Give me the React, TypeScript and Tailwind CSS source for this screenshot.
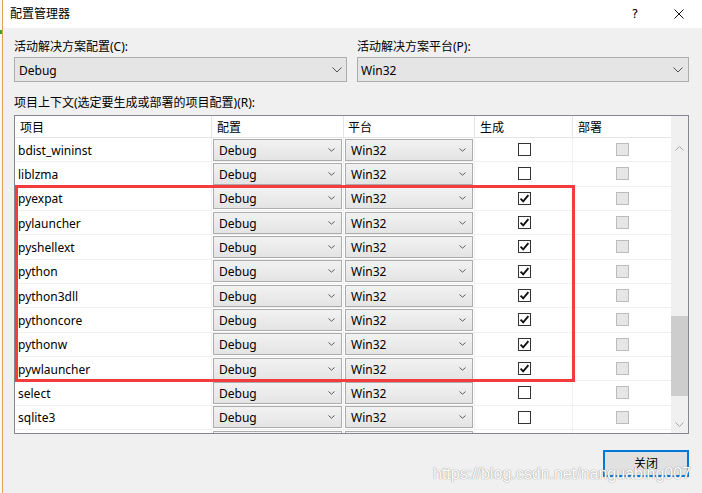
import React from "react";

const rows: { name: string; build: boolean }[] = [
  { name: "bdist_wininst", build: false },
  { name: "liblzma", build: false },
  { name: "pyexpat", build: true },
  { name: "pylauncher", build: true },
  { name: "pyshellext", build: true },
  { name: "python", build: true },
  { name: "python3dll", build: true },
  { name: "pythoncore", build: true },
  { name: "pythonw", build: true },
  { name: "pywlauncher", build: true },
  { name: "select", build: false },
  { name: "sqlite3", build: false },
  { name: "", build: false },
];

function BigChevron() {
  return (
    <svg width="10" height="6" viewBox="0 0 10 6" className="shrink-0">
      <path d="M0.5 0.5 L5 5 L9.5 0.5" fill="none" stroke="#505050" strokeWidth="1" />
    </svg>
  );
}

function SmallChevron() {
  return (
    <svg width="7" height="4" viewBox="0 0 7 4" className="shrink-0">
      <path d="M0.5 0.5 L3.5 3.2 L6.5 0.5" fill="none" stroke="#5a5a5a" strokeWidth="1" />
    </svg>
  );
}

function CellCombo({ text, width }: { text: string; width: string }) {
  return (
    <div
      className={`${width} ml-[1px] h-[22px] border border-[#acacac] bg-gradient-to-b from-[#f2f2f2] to-[#e4e4e4] flex items-center justify-between pl-[5px] pr-[6px]`}
    >
      <span className="pt-[2px]">{text}</span>
      <SmallChevron />
    </div>
  );
}

function Check({ on }: { on: boolean }) {
  return (
    <div className="w-[13px] h-[13px] border border-[#333333] bg-white flex items-center justify-center">
      {on && (
        <svg width="11" height="11" viewBox="0 0 11 11">
          <path d="M1.6 5.6 L4.2 8.3 L9.4 2.2" fill="none" stroke="#111" strokeWidth="1.9" />
        </svg>
      )}
    </div>
  );
}

function DisabledCheck() {
  return <div className="w-[13px] h-[13px] border border-[#bcbcbc] bg-[#e6e6e6]" />;
}

export default function App() {
  return (
    <div className="relative w-[702px] h-[493px] overflow-hidden flex bg-[#f0f0f0] text-[12px] leading-[16px] text-black font-['Noto_Sans','Noto_Sans_CJK_SC',sans-serif]">
      {/* left edge strip */}
      <div className="w-[2px] h-full bg-[#f7f7f7] flex flex-col">
        <div className="h-[30px]" />
        <div className="h-[4px] bg-[#3aa13a]" />
      </div>
      <div className="w-[1px] h-full bg-[#e6a24e]" />

      {/* dialog */}
      <div className="flex-1 flex flex-col">
        {/* title bar */}
        <div className="h-[28px] bg-white flex items-center justify-between pl-[7px] pr-[18px] pb-[1px]">
          <span className="text-[12px]">配置管理器</span>
          <div className="flex items-center gap-[36px]">
            <span className="text-[12px] font-['DejaVu_Sans',sans-serif]">?</span>
            <svg width="10" height="10" viewBox="0 0 10 10">
              <path d="M0.5 0.5 L9.5 9.5 M9.5 0.5 L0.5 9.5" stroke="#111" strokeWidth="1" />
            </svg>
          </div>
        </div>

        {/* body */}
        <div className="flex flex-col pl-[11px] pr-[13px] pt-[11px]">
          <div className="grid grid-cols-[333px_332px] gap-x-[10px]">
            <div className="flex flex-col">
              <span>活动解决方案配置(C):</span>
              <div className="mt-[2px] h-[25px] border border-[#adadad] bg-[#e5e5e5] flex items-center justify-between pl-[4px] pr-[4px]">
                <span className="pt-[2px]">Debug</span>
                <BigChevron />
              </div>
            </div>
            <div className="flex flex-col">
              <span>活动解决方案平台(P):</span>
              <div className="mt-[2px] h-[25px] border border-[#adadad] bg-[#e5e5e5] flex items-center justify-between pl-[3px] pr-[5px]">
                <span className="pt-[2px]">Win32</span>
                <BigChevron />
              </div>
            </div>
          </div>

          <span className="mt-[13px]">项目上下文(选定要生成或部署的项目配置)(R):</span>

          {/* table */}
          <div className="mt-[4px] w-[675px] h-[319px] border border-[#828790] bg-white flex overflow-hidden">
            <div className="flex-1 flex flex-col">
              {/* header */}
              <div className="h-[22px] shrink-0 flex border-b border-[#e5e5e5] bg-white">
                <div className="w-[197px] border-r border-[#e5e5e5] pl-[5px] pt-[2px] flex items-center">项目</div>
                <div className="w-[132px] border-r border-[#e5e5e5] pl-[5px] pt-[2px] flex items-center">配置</div>
                <div className="w-[131px] border-r border-[#e5e5e5] pl-[4px] pt-[2px] flex items-center">平台</div>
                <div className="w-[98px] border-r border-[#e5e5e5] pl-[5px] pt-[2px] flex items-center">生成</div>
                <div className="flex-1 pl-[5px] pt-[2px] flex items-center">部署</div>
              </div>
              {/* rows */}
              <div className="flex-1 overflow-hidden flex flex-col">
                {rows.map((r, i) => (
                  <div key={i} className="h-[24.33px] shrink-0 flex border-b border-[#f0f0f0]">
                    <div className="w-[197px] border-r border-[#f0f0f0] pl-[3px] pt-[2px] flex items-center">{r.name}</div>
                    <div className="w-[132px] border-r border-[#f0f0f0] flex items-center">
                      <CellCombo text="Debug" width="w-[129px]" />
                    </div>
                    <div className="w-[131px] border-r border-[#f0f0f0] flex items-center">
                      <CellCombo text="Win32" width="w-[128px]" />
                    </div>
                    <div className="w-[98px] border-r border-[#f0f0f0] flex items-center justify-center pl-[1px]">
                      <Check on={r.build} />
                    </div>
                    <div className="flex-1 flex items-center justify-center pl-[1px]">
                      <DisabledCheck />
                    </div>
                  </div>
                ))}
              </div>
            </div>
            {/* scrollbar */}
            <div className="w-[17px] h-full bg-[#f0f0f0] flex flex-col">
              <div className="h-[22px] shrink-0" />
              <div className="h-[20px] shrink-0 flex items-center justify-center">
                <svg width="9" height="5" viewBox="0 0 9 5">
                  <path d="M0.5 4.5 L4.5 0.5 L8.5 4.5" fill="none" stroke="#a6a6a6" strokeWidth="1" />
                </svg>
              </div>
              <div className="flex-1 flex flex-col">
                <div className="mt-[158px] h-[80px] bg-[#cdcdcd]" />
              </div>
              <div className="h-[17px] shrink-0 flex items-center justify-center">
                <svg width="9" height="5" viewBox="0 0 9 5">
                  <path d="M0.5 0.5 L4.5 4.5 L8.5 0.5" fill="none" stroke="#a6a6a6" strokeWidth="1" />
                </svg>
              </div>
            </div>
          </div>

          {/* footer */}
          <div className="mt-[16px] flex justify-end">
            <div className="w-[86px] h-[27px] border-2 border-[#0078d7] bg-[#e1e1e1] flex items-center justify-center pt-[1px]">
              关闭
            </div>
          </div>
        </div>
      </div>

      {/* red annotation rectangle */}
      <div className="absolute left-[15px] top-[185px] w-[560px] h-[197px] border-[3px] border-[#f53c3c] pointer-events-none" />

      {/* watermark */}
      <div className="absolute left-[433px] top-[466px] text-[16px] leading-[16px] text-white font-['Liberation_Sans',Arial,sans-serif] [text-shadow:0_0_1px_#9a9a9a,0_0_1px_#9a9a9a] pointer-events-none whitespace-nowrap">
        https://blog.csdn.net/nanguabing007
      </div>
    </div>
  );
}
